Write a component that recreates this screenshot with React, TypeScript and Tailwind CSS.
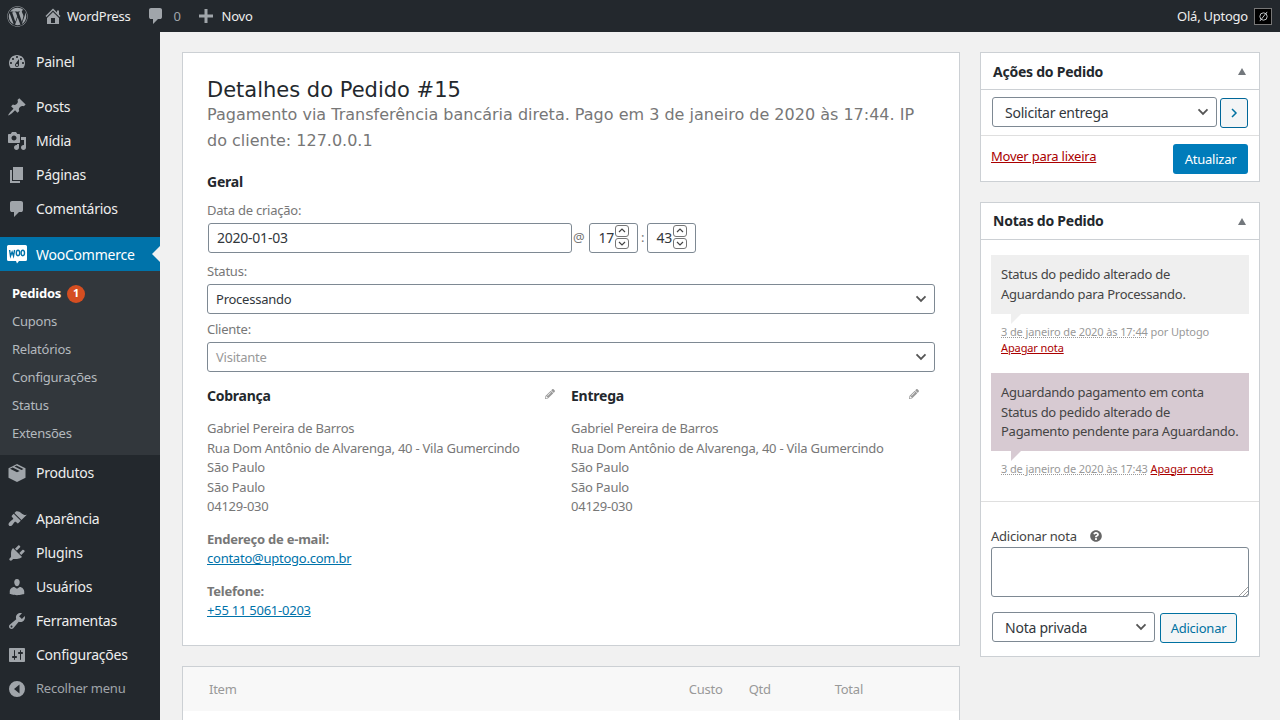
import { FaWordpress, FaQuestionCircle, FaPencilAlt } from "react-icons/fa";
import type { ReactNode } from "react";

const FONT = "font-['Noto_Sans','Open_Sans',sans-serif] tracking-[-0.015em]";

// dashicons, traced by hand
const PATHS = {
  home: "M16 8.500l1.530 1.530-1.060 1.060L10 4.620l-6.470 6.470-1.060-1.060L10 2.500l4 4v-2h2v4zm-6-2.460l6 5.990V18H4v-5.970zM12 17v-5H8v5h4z",
  comment: "M5 2h9q.820 0 1.410.590T16 4v7q0 .820-.590 1.410T14 13h-2l-5 5v-5H5q-.820 0-1.410-.590T3 11V4q0-.820.590-1.410T5 2z",
  plus: "M8.500 3h3v5.500H17v3h-5.500V17h-3v-5.500H3v-3h5.500z",
  dashboard: "M3.760 16h12.480c1.100-1.370 1.760-3.110 1.760-5 0-4.420-3.580-8-8-8s-8 3.580-8 8c0 1.890.660 3.630 1.760 5zM10 4c.550 0 1 .450 1 1s-.450 1-1 1-1-.450-1-1 .450-1 1-1zM6 6c.550 0 1 .450 1 1s-.450 1-1 1-1-.450-1-1 .450-1 1-1zm8 0c.550 0 1 .450 1 1s-.450 1-1 1-1-.450-1-1 .450-1 1-1zm-5.370 5.550L12 7v6c0 1.100-.900 2-2 2s-2-.900-2-2c0-.570.240-1.080.630-1.450zM4 10c.550 0 1 .450 1 1s-.450 1-1 1-1-.450-1-1 .450-1 1-1zm12 0c.550 0 1 .450 1 1s-.450 1-1 1-1-.450-1-1 .450-1 1-1zm-5 3c0-.550-.450-1-1-1s-1 .450-1 1 .450 1 1 1 1-.450 1-1z",
  post: "M10.440 3.020l1.820-1.820 6.360 6.350-1.830 1.820c-1.050-.680-2.480-.570-3.410.360l-.750.750c-.920.930-1.040 2.350-.350 3.410l-1.830 1.820-2.410-2.410-2.800 2.790c-.420.420-3.380 2.710-3.800 2.290s1.860-3.390 2.280-3.810l2.790-2.790L4.100 9.360l1.830-1.820c1.050.690 2.480.570 3.400-.360l.750-.750c.930-.920 1.050-2.350.360-3.410z",
  media: "M13 11V4c0-.550-.450-1-1-1h-1.670L9 1H5L3.670 3H2c-.550 0-1 .450-1 1v7c0 .550.450 1 1 1h10c.550 0 1-.450 1-1zM7 4.500c1.380 0 2.500 1.120 2.500 2.500S8.380 9.500 7 9.500 4.500 8.380 4.500 7 5.620 4.500 7 4.500zM14 6h5v10.500c0 1.380-1.120 2.500-2.500 2.500S14 17.880 14 16.500s1.120-2.500 2.500-2.500c.170 0 .340.020.500.050V9h-3V6zm-4 8.050V13h2v3.500c0 1.380-1.120 2.500-2.500 2.500S7 17.880 7 16.500 8.120 14 9.500 14c.170 0 .340.020.500.050z",
  page: "M6 15V2h10v13H6zm-1 1h8v2H3V5h2v11z",
  appearance: "M14.480 11.060L7.410 3.990l1.500-1.500c.500-.560 2.300-.470 3.510.320 1.210.800 1.430 1.280 2.910 2.100 1.180.640 2.450 1.260 4.450.850zm-.710.710L6.700 4.700 4.930 6.470c-.390.390-.390 1.020 0 1.410l1.060 1.060c.390.390.390 1.030 0 1.420-.600.600-1.430 1.110-2.210 1.690-.350.260-.700.530-1.010.840-1.430 1.430-1.400 2.400-.950 3.350.500 1 1.900 1.300 3.300 0 .300-.300.600-.700.800-1 .600-.800 1.100-1.600 1.700-2.200.400-.400 1-.400 1.400 0l1.060 1.060c.390.390 1.020.390 1.410 0z",
  plugins: "M13.110 4.360L9.870 7.600 8 5.730l3.240-3.240c.350-.340 1.050-.200 1.560.320.520.510.660 1.210.310 1.550zm-8 1.770l.910-1.120 9.010 9.010-1.190.840c-.710.710-2.630 1.160-3.820 1.160H6.140L4.900 17.260c-.590.590-1.540.590-2.120 0-.590-.580-.590-1.530 0-2.120l1.240-1.240v-3.880c0-1.130.400-3.190 1.090-3.890zm7.260 3.970l3.240-3.240c.340-.350 1.040-.210 1.550.310.520.510.660 1.210.310 1.550l-3.240 3.250z",
  users: "M10 9.250c-2.270 0-2.730-3.440-2.730-3.440C7 4.020 7.820 2 9.970 2c2.160 0 2.980 2.020 2.710 3.810 0 0-.410 3.440-2.680 3.440zm0 2.570L12.720 10c2.390 0 4.520 2.330 4.520 4.530v2.490s-3.650 1.130-7.240 1.130c-3.650 0-7.240-1.130-7.240-1.130v-2.490c0-2.250 1.940-4.480 4.470-4.480z",
  tools: "M16.680 9.770c-1.340 1.340-3.300 1.670-4.950.990l-5.410 6.520c-.990.990-2.590.990-3.580 0s-.990-2.590 0-3.570l6.520-5.420c-.680-1.650-.350-3.610.990-4.950 1.280-1.280 3.120-1.620 4.720-1.060l-2.890 2.890 2.820 2.820 2.860-2.870c.530 1.580.180 3.390-1.080 4.650zM3.810 16.210c.400.390 1.040.390 1.430 0 .400-.400.400-1.040 0-1.430-.390-.400-1.030-.400-1.430 0-.390.390-.390 1.030 0 1.430z",
  settings: "M18 16V4c0-.550-.450-1-1-1H3c-.550 0-1 .450-1 1v12c0 .550.450 1 1 1h14c.550 0 1-.450 1-1zM8 11h1c.550 0 1 .450 1 1s-.450 1-1 1H8v1.500c0 .280-.220.500-.500.500s-.500-.220-.500-.500V13H6c-.550 0-1-.450-1-1s.450-1 1-1h1V5.500c0-.280.220-.500.500-.500s.500.220.500.500V11zm5-2h-1c-.550 0-1-.450-1-1s.450-1 1-1h1V5.500c0-.280.220-.500.500-.500s.500.220.500.500V7h1c.550 0 1 .450 1 1s-.450 1-1 1h-1v5.500c0 .280-.220.500-.500.500s-.500-.220-.500-.500V9z",
  collapse: "M10 2a8 8 0 1 1 0 16 8 8 0 0 1 0-16zm2.500 3.500L7 10l5.500 4.500z",
  box: "M10 1l8.500 4.300v9.400L10 19l-8.500-4.300V5.300zM3 5.800l7 3.500 2.700-1.400-7-3.500zm4.500-2.300l7 3.500 2-1.100-7-3.500z",
};

function Dash({ d, size = "w-5 h-5" }: { d: string; size?: string }) {
  return (
    <svg viewBox="0 0 20 20" className={`${size} fill-[#a0a5aa]`}>
      <path fillRule="evenodd" d={d} />
    </svg>
  );
}

function WooIcon() {
  return (
    <svg viewBox="0 0 20 20" className="w-5 h-5">
      <path className="fill-white" d="M1.500 1h17A1.500 1.500 0 0 1 20 2.500v13a1.500 1.500 0 0 1-1.500 1.500H12l-2 2.500L9 17H1.500A1.500 1.500 0 0 1 0 15.500v-13A1.500 1.500 0 0 1 1.500 1z" />
      <path className="stroke-[#0073aa] fill-none" strokeWidth="1.400" d="M2.600 6l.9 6 1.600-4 1.400 4L7.600 6" />
      <ellipse className="stroke-[#0073aa] fill-none" strokeWidth="1.400" cx="11" cy="9" rx="1.700" ry="2.800" />
      <ellipse className="stroke-[#0073aa] fill-none" strokeWidth="1.400" cx="15.800" cy="9" rx="1.700" ry="2.800" />
    </svg>
  );
}

function MenuItem({ d, label }: { d: string; label: string }) {
  return (
    <div className="h-[34px] flex items-center text-[#eeeeee] text-sm">
      <span className="w-9 flex justify-center pt-px pl-[2px] pr-[4px] shrink-0"><Dash d={d} /></span>
      <span className="pt-px">{label}</span>
    </div>
  );
}

function Sidebar() {
  return (
    <aside className="w-40 shrink-0 bg-[#23282d] pt-3">
      <MenuItem d={PATHS.dashboard} label="Painel" />
      <div className="h-[11px]" />
      <MenuItem d={PATHS.post} label="Posts" />
      <MenuItem d={PATHS.media} label="Mídia" />
      <MenuItem d={PATHS.page} label="Páginas" />
      <MenuItem d={PATHS.comment} label="Comentários" />
      <div className="h-3" />
      <div className="relative h-[34px] bg-[#0073aa] flex items-center text-white text-sm">
        <span className="w-9 flex justify-center pl-[2px] pr-[4px] shrink-0"><WooIcon /></span>
        <span className="pt-px">WooCommerce</span>
        <span className="absolute right-0 top-[9px] border-y-8 border-r-8 border-y-transparent border-r-[#f1f1f1]" />
      </div>
      <div className="bg-[#32373c] py-2 text-[13px] text-[#b4b9be]">
        <div className="h-7 pl-3 pt-px flex items-center gap-[6px] text-white font-bold">
          Pedidos
          <span className="w-[18px] h-[18px] rounded-full bg-[#d54e21] flex items-center justify-center text-[11px]">1</span>
        </div>
        {["Cupons", "Relatórios", "Configurações", "Status", "Extensões"].map((s) => (
          <div key={s} className="h-7 pl-3 pt-px flex items-center">{s}</div>
        ))}
      </div>
      <MenuItem d={PATHS.box} label="Produtos" />
      <div className="h-3" />
      <MenuItem d={PATHS.appearance} label="Aparência" />
      <MenuItem d={PATHS.plugins} label="Plugins" />
      <MenuItem d={PATHS.users} label="Usuários" />
      <MenuItem d={PATHS.tools} label="Ferramentas" />
      <MenuItem d={PATHS.settings} label="Configurações" />
      <div className="h-[34px] flex items-center text-[13px] text-[#a0a5aa]">
        <span className="w-9 flex justify-center pt-px pl-[2px] pr-[4px] shrink-0"><Dash d={PATHS.collapse} /></span>
        <span className="pt-px">Recolher menu</span>
      </div>
    </aside>
  );
}

function TopBar() {
  return (
    <header className="h-8 shrink-0 bg-[#23282d] flex items-center text-[13px] text-[#eeeeee] pl-[7px] pr-2">
      <FaWordpress className="w-[21px] h-[21px] text-[#a0a5aa]" />
      <span className="ml-[15px]"><Dash d={PATHS.home} /></span>
      <span className="ml-[4px] pt-px">WordPress</span>
      <span className="ml-[16px]"><Dash d={PATHS.comment} /></span>
      <span className="ml-[7px] pt-px text-[#a0a5aa]">0</span>
      <span className="ml-[15px]"><Dash d={PATHS.plus} /></span>
      <span className="ml-[6px] pt-px">Novo</span>
      <span className="ml-auto pt-px">Olá, Uptogo</span>
      <span className="ml-[6px] w-[18px] h-[17px] bg-black border border-[#777777] flex items-center justify-center">
        <svg viewBox="0 0 12 12" className="w-[11px] h-[11px] fill-none stroke-[#ccd0d4]" strokeWidth="1">
          <circle cx="6" cy="6" r="4" />
          <path d="M2 11 10 1" />
        </svg>
      </span>
    </header>
  );
}

function Chevron() {
  return (
    <svg viewBox="0 0 20 20" className="absolute right-[4px] top-[6px] w-[18px] h-[18px] fill-none stroke-[#555555]" strokeWidth="2">
      <path d="M5 6l5 5 5-5" />
    </svg>
  );
}

function Field({ text, muted }: { text: string; muted?: boolean }) {
  return (
    <div className={`relative mt-[4px] h-[30px] border border-[#7e8993] rounded-[3px] bg-white flex items-center px-2 pt-px text-[13px] ${muted ? "text-[#999999]" : "text-[#32373c]"}`}>
      {text}
      <Chevron />
    </div>
  );
}

function TimeInput({ value }: { value: string }) {
  return (
    <div className="relative w-[49px] h-[30px] border border-[#7e8993] rounded-[3px] bg-white text-sm text-[#32373c] flex items-center justify-end pr-[23px]">
      {value}
      <div className="absolute right-[8px] top-[1px] w-[14px] h-[24px] flex flex-col gap-px text-[#444444]">
        <span className="h-[12px] border border-[#767676] rounded-[3px] flex items-center justify-center">
          <svg viewBox="0 0 8 5" className="w-2 h-[5px] fill-none stroke-current" strokeWidth="1.200"><path d="M1 4l3-3 3 3" /></svg>
        </span>
        <span className="h-[12px] border border-[#767676] rounded-[3px] flex items-center justify-center">
          <svg viewBox="0 0 8 5" className="w-2 h-[5px] fill-none stroke-current" strokeWidth="1.200"><path d="M1 1l3 3 3-3" /></svg>
        </span>
      </div>
    </div>
  );
}

function Address({ title }: { title: string }) {
  return (
    <div className="pr-4">
      <div className="flex justify-between items-start h-[21px]">
        <h3 className="text-sm font-bold text-[#23282d]">{title}</h3>
        <FaPencilAlt className="w-[10px] h-[10px] mt-[3px] text-[#999999]" />
      </div>
      <p className="mt-[12px] text-[13px] leading-[19.500px] text-[#777777]">
        Gabriel Pereira de Barros<br />
        Rua Dom Antônio de Alvarenga, 40 - Vila Gumercindo<br />
        São Paulo<br />
        São Paulo<br />
        04129-030
      </p>
    </div>
  );
}

function OrderPanel() {
  return (
    <section className="h-[594px] shrink-0 bg-white border border-[#ccd0d4] px-6 pt-[23px]">
      <h2 className="font-['DejaVu_Sans',sans-serif] tracking-normal text-[21px] leading-[28px] text-[#23282d]">Detalhes do Pedido #15</h2>
      <p className="font-['DejaVu_Sans',sans-serif] tracking-normal text-base leading-[26px] text-[#777777] -mt-[2px]">
        Pagamento via Transferência bancária direta. Pago em 3 de janeiro de 2020 às 17:44. IP do cliente: 127.0.0.1
      </p>
      <h3 className="mt-[17px] text-sm font-bold text-[#23282d] leading-[21px]">Geral</h3>
      <div className="mt-[9px] text-[13px] text-[#777777] leading-[18px]">Data de criação:</div>
      <div className="mt-[4px] flex items-center ml-px text-[#777777] text-[13px]">
        <div className="w-[364px] h-[30px] border border-[#7e8993] rounded-[3px] bg-white flex items-center px-2 text-sm text-[#32373c]">2020-01-03</div>
        <span className="w-[17px] pl-[1px]">@</span>
        <TimeInput value="17" />
        <span className="w-[9px] text-center">:</span>
        <TimeInput value="43" />
      </div>
      <div className="mt-[9px] text-[13px] text-[#777777] leading-[18px]">Status:</div>
      <Field text="Processando" />
      <div className="mt-[6px] text-[13px] text-[#777777] leading-[18px]">Cliente:</div>
      <Field text="Visitante" muted />
      <div className="mt-[14px] grid grid-cols-2">
        <Address title="Cobrança" />
        <Address title="Entrega" />
      </div>
      <div className="mt-[13px] text-[13px] leading-[19.500px] text-[#777777] font-bold">Endereço de e-mail:</div>
      <a className="text-[13px] leading-[19.500px] text-[#0073aa] underline block">contato@uptogo.com.br</a>
      <div className="mt-[13px] text-[13px] leading-[19.500px] text-[#777777] font-bold">Telefone:</div>
      <a className="text-[13px] leading-[19.500px] text-[#0073aa] underline block">+55 11 5061-0203</a>
    </section>
  );
}

function ItemsPanel() {
  return (
    <section className="flex-1 bg-white border border-[#ccd0d4] border-b-0">
      <div className="h-11 pt-px bg-[#f8f8f8] flex items-center text-[13px] text-[#999999]">
        <span className="ml-[26px]">Item</span>
        <span className="ml-auto">Custo</span>
        <span className="ml-[26px] w-[23px]">Qtd</span>
        <span className="ml-[63px] mr-[96px]">Total</span>
      </div>
    </section>
  );
}

function BoxHeader({ title, nudge }: { title: string; nudge?: boolean }) {
  return (
    <div className="h-[37px] border-b border-[#ccd0d4] flex items-center justify-between pl-3 pr-[13px]">
      <h3 className={`text-sm font-bold text-[#23282d] ${nudge ? "pt-[2px]" : ""}`}>{title}</h3>
      <span className="border-x-[4.500px] border-b-[7px] border-x-transparent border-b-[#72777c]" />
    </div>
  );
}

function SelectBox({ text, className }: { text: string; className: string }) {
  return (
    <div className={`relative h-[30px] border border-[#7e8993] rounded-[3px] bg-white flex items-center pl-3 pt-px text-sm text-[#32373c] ${className}`}>
      {text}
      <Chevron />
    </div>
  );
}

function ActionsBox() {
  return (
    <section className="h-[130px] bg-white border border-[#ccd0d4]">
      <BoxHeader title="Ações do Pedido" nudge />
      <div className="h-[46px] border-b border-[#dfdfdf] flex items-start pl-[11px] pt-[7px]">
        <SelectBox text="Solicitar entrega" className="w-[225px]" />
        <div className="ml-[3px] mt-[1px] w-[28px] h-[30px] border border-[#006799] rounded-[3px] bg-[#f3f5f6] text-[#0071a1] flex items-center justify-center">
          <svg viewBox="0 0 10 10" className="w-[10px] h-[10px] fill-none stroke-current" strokeWidth="1.500"><path d="M3 1l4 4-4 4" /></svg>
        </div>
      </div>
      <div className="flex justify-between items-start pl-[10px] pr-[11px] pt-[8px]">
        <a className="text-[13px] text-[#a00] underline mt-[3px]">Mover para lixeira</a>
        <button className="w-[75px] h-[30px] pt-px bg-[#007cba] rounded-[3px] text-white text-[13px]">Atualizar</button>
      </div>
    </section>
  );
}

function Note({ bg, tail, pad, text, children }: { bg: string; tail: string; pad: string; text: ReactNode; children: ReactNode }) {
  return (
    <div>
      <div className={`relative px-[10px] pt-[10px] text-[13px] tracking-[-0.02em] leading-[19.500px] text-[#444444] ${pad} ${bg}`}>
        {text}
        <span className={`absolute left-5 top-full border-t-[10px] border-r-[10px] border-r-transparent ${tail}`} />
      </div>
      <div className="mt-[10px] px-[10px] text-[11px] tracking-[-0.01em] leading-4 text-[#999999]">{children}</div>
    </div>
  );
}

function NotesBox() {
  return (
    <section className="h-[455px] bg-white border border-[#ccd0d4]">
      <BoxHeader title="Notas do Pedido" />
      <div className="h-[262px] border-b border-[#dfdfdf] px-[10px] pt-[15px]">
        <Note bg="bg-[#efefef]" tail="border-t-[#efefef]" pad="pb-[10px]" text={<>Status do pedido alterado de<br />Aguardando para Processando.</>}>
          <span className="underline decoration-dotted">3 de janeiro de 2020 às 17:44</span> por Uptogo<br />
          <a className="text-[#a00] underline">Apagar nota</a>
        </Note>
        <div className="h-[17px]" />
        <Note bg="bg-[#d7cad2]" tail="border-t-[#d7cad2]" pad="pb-[9px]" text={<>Aguardando pagamento em conta<br />Status do pedido alterado de<br />Pagamento pendente para Aguardando.</>}>
          <span className="underline decoration-dotted">3 de janeiro de 2020 às 17:43</span>{" "}
          <a className="text-[#a00] underline">Apagar nota</a>
        </Note>
      </div>
      <div className="px-[10px]">
        <div className="mt-[24px] pb-px flex items-center text-[13px] text-[#444444] leading-[20px]">
          Adicionar nota
          <FaQuestionCircle className="ml-[13px] w-3 h-3 text-[#666666]" />
        </div>
        <div className="relative h-[50px] border border-[#7e8993] rounded-[3px]">
          <svg viewBox="0 0 10 10" className="absolute right-0 bottom-0 w-[10px] h-[10px] stroke-[#888888]" strokeWidth="0.800"><path d="M1 10 10 1M5 10l5-5M8 10l2-2" /></svg>
        </div>
        <div className="mt-[15px] flex items-start pl-px">
          <SelectBox text="Nota privada" className="w-[163px]" />
          <button className="ml-[5px] mt-[1px] w-[77px] h-[30px] pt-px border border-[#0071a1] rounded-[3px] bg-[#f3f5f6] text-[#0071a1] text-[13px]">Adicionar</button>
        </div>
      </div>
    </section>
  );
}

export default function App() {
  return (
    <div className={`w-[1280px] h-[720px] overflow-hidden flex flex-col bg-[#f1f1f1] ${FONT}`}>
      <TopBar />
      <div className="flex-1 flex min-h-0">
        <Sidebar />
        <main className="flex-1 flex gap-5 pl-[22px] pr-5 pt-5 min-w-0">
          <div className="w-[778px] shrink-0 flex flex-col gap-5">
            <OrderPanel />
            <ItemsPanel />
          </div>
          <div className="w-[280px] shrink-0 flex flex-col gap-5">
            <ActionsBox />
            <NotesBox />
          </div>
        </main>
      </div>
    </div>
  );
}
